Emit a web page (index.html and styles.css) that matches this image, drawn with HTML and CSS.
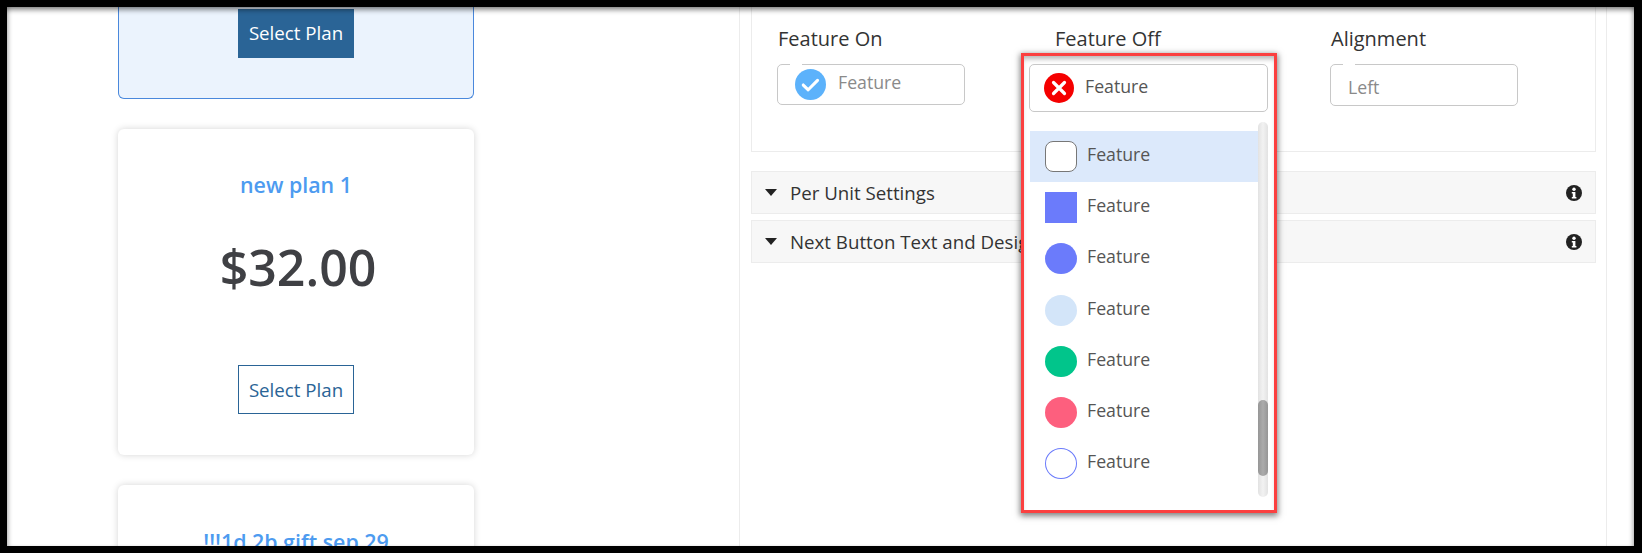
FILE: index.html
```html
<!DOCTYPE html>
<html lang="en">
<head>
<meta charset="utf-8">
<title>Plan settings</title>
<link rel="stylesheet" href="styles.css">
</head>
<body>
<div class="frame">
  <main class="page">
    <section class="plans">
      <article class="card card-active">
        <button class="btn btn-solid">Select Plan</button>
      </article>
      <article class="card card-plain">
        <h2 class="plan-name">new plan 1</h2>
        <div class="price">$32.00</div>
        <button class="btn btn-outline">Select Plan</button>
      </article>
      <article class="card card-plain card-cut">
        <h2 class="plan-name">!!!1d 2b gift sep 29</h2>
      </article>
    </section>
    <section class="settings">
      <div class="panel">
        <div class="fields">
          <div class="field field-on">
            <div class="label">Feature On</div>
            <div class="input input-on">
              <span class="notch"></span>
              <svg class="ico" viewBox="0 0 30 30"><circle cx="15" cy="15" r="15" fill="#5cb2fb"/><path d="M8 15.5l4.8 4.6 9-9" fill="none" stroke="#fff" stroke-width="3" stroke-linecap="round" stroke-linejoin="round"/></svg>
              <span class="muted muted-up">Feature</span>
            </div>
          </div>
          <div class="field field-off">
            <div class="label">Feature Off</div>
          </div>
          <div class="field field-align">
            <div class="label">Alignment</div>
            <div class="input input-align">
              <span class="notch"></span>
              <span class="muted muted-down">Left</span>
            </div>
          </div>
        </div>
      </div>
      <div class="acc">
        <svg class="caret" viewBox="0 0 12 7"><path d="M0 0h12L6 7z" fill="#222"/></svg>
        <span class="acc-title">Per Unit Settings</span>
        <svg class="info" viewBox="0 0 16 16"><circle cx="8" cy="8" r="8" fill="#222"/><circle cx="8" cy="4.2" r="1.7" fill="#fff"/><path d="M5.8 6.9h3.6v5h1v1.6H5.8v-1.6h1v-3.4h-1z" fill="#fff"/></svg>
      </div>
      <div class="acc">
        <svg class="caret" viewBox="0 0 12 7"><path d="M0 0h12L6 7z" fill="#222"/></svg>
        <span class="acc-title">Next Button Text and Design</span>
        <svg class="info" viewBox="0 0 16 16"><circle cx="8" cy="8" r="8" fill="#222"/><circle cx="8" cy="4.2" r="1.7" fill="#fff"/><path d="M5.8 6.9h3.6v5h1v1.6H5.8v-1.6h1v-3.4h-1z" fill="#fff"/></svg>
      </div>
    </section>
    <aside class="popup">
      <div class="select">
        <svg class="ico" viewBox="0 0 30 30"><circle cx="15" cy="15" r="15" fill="#f50000"/><path d="M9.5 9.5l11 11M20.5 9.5l-11 11" fill="none" stroke="#fff" stroke-width="3.2" stroke-linecap="round"/></svg>
        <span class="txt">Feature</span>
      </div>
      <div class="list-wrap">
        <ul class="list">
          <li class="item item-on"><span class="sw sw-rounded"></span><span class="txt">Feature</span></li>
          <li class="item"><span class="sw sw-square"></span><span class="txt">Feature</span></li>
          <li class="item"><span class="sw sw-blue"></span><span class="txt">Feature</span></li>
          <li class="item"><span class="sw sw-pale"></span><span class="txt">Feature</span></li>
          <li class="item"><span class="sw sw-green"></span><span class="txt">Feature</span></li>
          <li class="item"><span class="sw sw-pink"></span><span class="txt">Feature</span></li>
          <li class="item"><span class="sw sw-ring"></span><span class="txt">Feature</span></li>
        </ul>
        <div class="scroll"><div class="thumb"></div></div>
      </div>
    </aside>
  </main>
</div>
</body>
</html>
```
FILE: styles.css
```css
* { box-sizing: border-box; }
html, body { margin: 0; padding: 0; background: #000; }
body { font-family: "Open Sans", "Noto Sans", sans-serif; color: #333; }
.frame {
  position: relative;
  width: 1642px;
  height: 553px;
  border-style: solid;
  border-color: #000;
  border-width: 7px 8px 7px 7px;
  background: #fff;
  overflow: hidden;
}
.frame::after {
  content: "";
  position: absolute;
  inset: 0;
  pointer-events: none;
  box-shadow: inset 0 5px 5px -2px rgba(0,0,0,.45), inset 4px 0 4px -2px rgba(0,0,0,.2), inset -4px 0 4px -2px rgba(0,0,0,.2);
}
.page { display: flex; height: 100%; }

/* Left column of plans */
.plans { width: 732px; padding-left: 111px; flex: none; }
.card { width: 356px; border-radius: 6px; text-align: center; }
.card-active {
  height: 92px;
  padding-top: 2px;
  background: #ebf3fd;
  border: 1px solid #4a88dc;
  border-top: 0;
  border-radius: 0 0 6px 6px;
}
.card-plain {
  height: 326px;
  margin-top: 30px;
  padding-top: 41px;
  background: #fff;
  box-shadow: 0 0 7px rgba(0,0,0,.17);
}
.card-cut { padding-top: 42px; }
.plan-name { margin: 0; font-size: 21.4px; line-height: 30px; font-weight: 600; color: #4d9bf0; }
.price { margin-top: 34px; padding-left: 4px; font-size: 50px; line-height: 66px; font-weight: 600; color: #3f4044; }
.btn {
  display: block;
  width: 116px;
  height: 49px;
  margin: 0 auto;
  padding: 0;
  font: 400 18.7px "Open Sans", sans-serif;
  border: 1px solid #2a6496;
  border-radius: 0;
}
.btn-solid { background: #2a6496; color: #fff; padding-bottom: 2px; }
.btn-outline { margin-top: 65px; background: #fff; color: #2a6496; }

/* Right settings */
.settings {
  width: 868px;
  padding: 0 10px 0 11px;
  border-left: 1px solid #ececec;
  border-right: 1px solid #ececec;
  flex: none;
}
.panel { height: 145px; border: 1px solid #ececec; border-top: 0; }
.fields { display: flex; padding-left: 25px; padding-top: 20px; }
.field { flex: none; }
.field-on { width: 277px; }
.field-off { width: 276px; }
.field-align { width: 200px; }
.label { font-size: 20px; line-height: 24px; color: #333; padding-left: 1px; }
.input {
  position: relative;
  display: flex;
  align-items: center;
  margin-top: 13px;
  border: 1px solid #c8c8c8;
  border-radius: 5px;
  background: #fff;
}
.input-on { width: 188px; height: 41px; padding-left: 17px; gap: 12px; }
.input-on .ico { width: 31px; height: 31px; }
.input-align { width: 188px; height: 42px; padding-left: 17px; }
.notch { position: absolute; left: 12px; top: -1px; width: 12px; height: 2px; background: #fff; }
.muted { font-size: 17.7px; color: #8a8a8a; }
.muted-up { padding-bottom: 5px; }
.muted-down { padding-top: 3px; }
.ico { width: 30px; height: 30px; flex: none; }
.acc {
  display: flex;
  align-items: center;
  height: 43px;
  margin-top: 6px;
  padding: 0 13px;
  background: #f7f7f7;
  border: 1px solid #ececec;
  font-size: 18.7px;
  color: #333;
}
.panel + .acc { margin-top: 19px; }
.caret { width: 12px; height: 7px; flex: none; }
.acc-title { margin-left: 13px; flex: 1; white-space: nowrap; }
.info { width: 16px; height: 16px; flex: none; }

/* Highlighted dropdown */
.popup {
  position: absolute;
  left: 1014px;
  top: 46px;
  width: 256px;
  height: 460px;
  padding: 8px 0 0 5px;
  background: #fff;
  border: 3px solid #fb4040;
  box-shadow: 0 2px 6px 1px rgba(0,0,0,.5), inset 0 5px 5px -2px rgba(0,0,0,.28);
}
.select {
  display: flex;
  align-items: center;
  gap: 11px;
  width: 239px;
  height: 48px;
  padding-left: 14px;
  border: 1px solid #c8c8c8;
  border-radius: 5px;
  background: #fff;
  font-size: 17.7px;
  color: #555;
}
.txt { padding-bottom: 5px; }
.list-wrap { display: flex; width: 238px; height: 375px; margin: 10px 0 0 1px; }
.list { list-style: none; margin: 9px 0 0; padding: 0; width: 228px; }
.item {
  display: flex;
  align-items: center;
  height: 51.2px;
  padding-left: 15px;
  gap: 10px;
  font-size: 17.7px;
  color: #555;
}
.item-on { background: #dce9fb; }
.sw { width: 32px; height: 31px; flex: none; border-radius: 50%; }
.sw-rounded { background: #fff; border: 1px solid #777; border-radius: 8px; }
.sw-square { background: #6b7bfb; border-radius: 0; }
.sw-blue { background: #6b7bfb; }
.sw-pale { background: #d3e5f9; }
.sw-green { background: #01c58b; }
.sw-pink { background: #fd5f7e; }
.sw-ring { background: #fff; border: 1px solid #6b7bfb; }
.scroll {
  position: relative;
  width: 10px;
  height: 375px;
  border-radius: 5px;
  background: linear-gradient(90deg, #e2e2e2, #f2f2f2 50%, #e2e2e2);
}
.thumb {
  position: absolute;
  left: 0;
  top: 278px;
  width: 10px;
  height: 76px;
  border-radius: 5px;
  background: linear-gradient(90deg, #969696, #ababab 50%, #969696);
}
```
